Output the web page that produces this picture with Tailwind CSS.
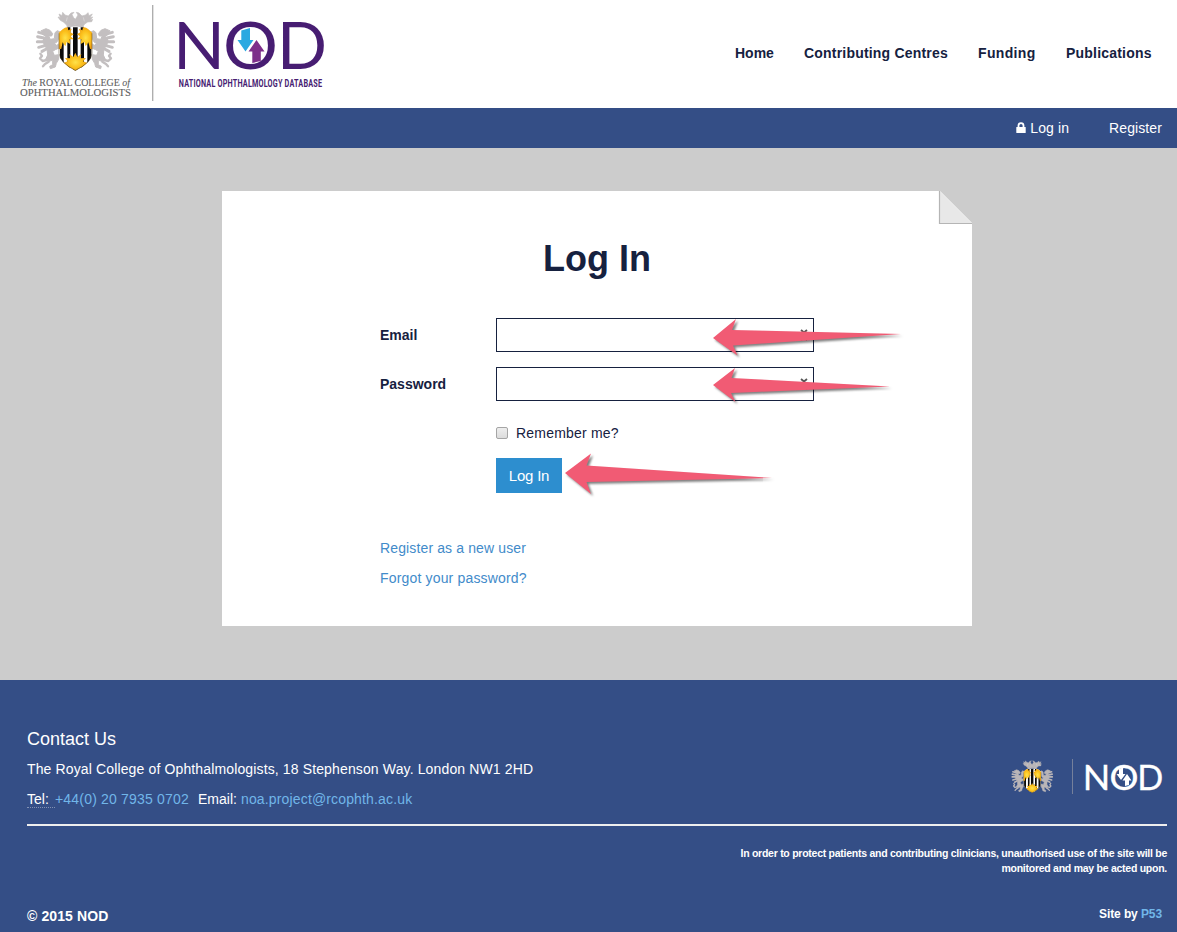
<!DOCTYPE html>
<html lang="en">
<head>
<meta charset="utf-8">
<title>Log In - NOD</title>
<script src="https://cdn.jsdelivr.net/npm/@tailwindcss/browser@4"></script>
</head>
<body class="w-[1177px] h-[932px] overflow-hidden bg-[#ccc] font-['Liberation_Sans',Arial,sans-serif] text-sm text-[#16213f] flex flex-col">

<svg class="absolute w-0 h-0" aria-hidden="true">
  <defs>
    <clipPath id="shield"><path d="M188 88 Q196 80 206 82 L248 82 Q257 80 265 88 L277 98 V160 Q274 190 226 212 Q180 190 176 160 V98 Z"/></clipPath>
    <radialGradient id="sun"><stop offset="0" stop-color="#ffe24a"/><stop offset=".55" stop-color="#fbc01c"/><stop offset="1" stop-color="#f0a010"/></radialGradient>
    <g id="supporter" fill="none" stroke="currentColor" stroke-linecap="round" stroke-linejoin="round">
      <path fill="currentColor" stroke-width="3" d="M124 92 L138 86 L150 91 L158 101 L155 108 L146 108 L151 118 L163 116 L165 98 L172 92 L183 97 L176 104 L175 119 L170 127 L163 130 L170 136 L178 131 V144 L166 149 L158 154 L163 166 L176 164 V178 L169 190 L166 201 L151 206 L149 199 L158 194 L158 181 L146 184 L137 178 L143 165 L141 146 L133 137 L129 121 L137 109 L128 103 Z"/>
      <path stroke-width="9" d="M130 101 L116 97 M132 114 L113 110 M132 125 L112 125 M135 137 L116 142 M139 147 L126 154"/>
      <path stroke-width="7" d="M140 180 L128 183 L120 175 L126 168 L121 161 M146 185 L135 192 L129 199"/>
    </g>
    <g id="crest">
      <use href="#supporter"/>
      <use href="#supporter" transform="matrix(-1 0 0 1 453 0)"/>
      <g fill="none" stroke="currentColor" stroke-linecap="round" stroke-linejoin="round">
        <path fill="currentColor" stroke-width="2" d="M203 79 Q225 70 249 79 L254 72 L263 66 L275 65 L278 58 L271 61 L278 51 L270 53 L277 42 L267 47 L264 38 L257 45 L246 48 L237 39 L229 37 L234 45 L229 53 L226 58 L221 53 L216 44 L222 37 L213 39 L205 48 L195 45 L188 37 L186 47 L177 42 L181 53 L174 51 L181 61 L190 66 L197 72 Z"/>
        <path stroke-width="6" d="M203 81 Q226 72 249 81"/>
      </g>
      <path d="M202 52 L199 64 M250 52 L253 64" stroke="#fff" stroke-width="2" opacity=".5"/>
      <g clip-path="url(#shield)">
        <path fill="#fff" d="M170 75 H282 V215 H170Z"/>
        <path fill="#0b0b0b" d="M180 120 H191 V215 H180Z M202 80 H211 V215 H202Z M219 80 H233 V215 H219Z M242 80 H252 V215 H242Z M262 120 H274 V215 H262Z"/>
        <path fill="url(#sun)" d="M170 78 H202 L205 91 L215 86 L211 97 L221 103 L212 109 L221 118 L209 118 L211 132 L200 126 L196 139 L188 127 L184 146 L170 150Z"/>
        <path fill="url(#sun)" d="M283 78 H250 L247 91 L237 86 L241 97 L231 103 L240 109 L232 118 L244 118 L242 132 L253 126 L257 139 L265 127 L270 146 L283 150Z"/>
        <path fill="url(#sun)" d="M226 158 L232 171 L244 162 L241 175 L258 174 L249 184 L263 189 L245 216 H208 L190 189 L203 184 L195 174 L211 175 L208 162 L220 171Z"/>
      </g>
      <path fill="none" stroke="#4a3f25" stroke-width="1.500" d="M177 100 V160 Q181 189 226 211 Q273 189 276 160 V100"/>
    </g>
  </defs>
</svg>

<header class="h-[108px] shrink-0 bg-white flex justify-between">
  <svg class="w-[345px] h-[108px]" viewBox="0 0 345 108" role="img" aria-label="The Royal College of Ophthalmologists, NOD">
    <use href="#crest" transform="scale(.3333)" color="#c3bfc0"/>
    <g fill="#5d5d5d" stroke="#5d5d5d" stroke-width=".1" font-family="'Liberation Serif',serif">
      <text x="22" y="86" font-size="11.300" textLength="108" lengthAdjust="spacingAndGlyphs"><tspan font-style="italic">The</tspan> ROYAL COLLEGE <tspan font-style="italic">of</tspan></text>
      <text x="20" y="95.500" font-size="11.300" textLength="111" lengthAdjust="spacingAndGlyphs">OPHTHALMOLOGISTS</text>
    </g>
    <path d="M152.700 5V101" stroke="#aaa" stroke-width="1.300"/>
    <g fill="#471d72" font-family="Lato,sans-serif" font-size="65">
      <text x="173" y="69" textLength="52" lengthAdjust="spacingAndGlyphs">N</text>
      <text x="223" y="69" textLength="55" lengthAdjust="spacingAndGlyphs">O</text>
      <text x="277" y="69" textLength="50" lengthAdjust="spacingAndGlyphs">D</text>
    </g>
    <path fill="#2ba9e1" d="M241.300 30.500L250 28V40H253.500L245.500 51.500L237.500 40H241.300Z"/>
    <path fill="#7d2f8a" d="M256.500 40L264.500 51.500H260.800V61L252.300 63V51.500H248.500Z"/>
    <text transform="translate(178.800 87) scale(.66 1)" fill="#471d72" font-family="Roboto,sans-serif" font-weight="700" font-size="11" textLength="217" lengthAdjust="spacing">NATIONAL OPHTHALMOLOGY DATABASE</text>
  </svg>
  <nav class="flex pt-[43px] pr-[15px] font-bold leading-5 tracking-[0.2px] whitespace-nowrap">
    <a class="w-[69px] tracking-normal">Home</a>
    <a class="w-[174px]">Contributing Centres</a>
    <a class="w-[88px] tracking-[0.350px]">Funding</a>
    <a class="w-[96px]">Publications</a>
  </nav>
</header>

<div class="h-10 shrink-0 bg-[#344e86] text-white flex items-center justify-end pr-[15px] gap-10">
  <a class="flex items-center gap-1">
    <svg class="w-[10px] h-3" viewBox="0 0 10 12"><path d="M2.500 6V3.600a2.500 2.500 0 0 1 5 0V6" fill="none" stroke="#fff" stroke-width="1.800"/><rect x=".3" y="5" width="9.400" height="6" rx=".6" fill="#fff"/></svg>
    <span class="tracking-[0.1px]">Log in</span>
  </a>
  <a class="tracking-[0.1px]">Register</a>
</div>

<main class="h-[532px] shrink-0 pt-[43px] pl-[222px]">
  <section class="relative w-[750px] h-[435px] bg-white pt-[45px]">
    <svg class="absolute right-0 top-0 w-[34px] h-[35px]" viewBox="0 0 34 35"><path fill="#ccc" d="M2 0H34V32Z"/><path fill="#e8e8e8" d="M1.500 0L34 32.500H1.500Z"/><path d="M1.500 0V32.500H34" fill="none" stroke="#b5b5b5" stroke-width="1.200"/></svg>
    <h1 class="text-center text-4xl leading-[46px] font-bold">Log In</h1>
    <form class="pl-[158px] pt-9">
      <div class="flex items-center h-[34px] mb-[15px]">
        <label class="w-[116px] font-bold">Email</label>
        <div class="w-[318px] h-[34px] border border-[#16213f] flex items-center justify-end pr-[5px]"><svg class="w-2 h-3" viewBox="0 0 8 12"><path d="M1 1L4 3.500L7 1M1 11L4 8.500L7 11M4 3V9" fill="none" stroke="#555" stroke-width="1.800"/></svg></div>
      </div>
      <div class="flex items-center h-[34px]">
        <label class="w-[116px] font-bold">Password</label>
        <div class="w-[318px] h-[34px] border border-[#16213f] flex items-center justify-end pr-[5px]"><svg class="w-2 h-3" viewBox="0 0 8 12"><path d="M1 1L4 3.500L7 1M1 11L4 8.500L7 11M4 3V9" fill="none" stroke="#555" stroke-width="1.800"/></svg></div>
      </div>
      <div class="pl-[116px] pt-[22px]">
        <label class="flex items-center gap-2 h-5 tracking-[0.2px]"><span class="size-3 rounded-[2px] border border-[#a5a5a5] bg-linear-to-b from-[#eee] to-[#dcdcdc]"></span>Remember me?</label>
        <button type="button" class="mt-[15px] block w-[66px] h-[35px] bg-[#2d8ecf] text-white text-[15px] leading-[35px] text-center tracking-[-0.2px]">Log In</button>
      </div>
      <div class="mt-[45px] text-[#428bca] leading-5 flex flex-col gap-2.5 tracking-[0.130px]">
        <a>Register as a new user</a>
        <a class="tracking-[0.170px]">Forgot your password?</a>
      </div>
    </form>
    <svg class="absolute left-[478px] top-[119px] w-[220px] h-[110px] drop-shadow-[2px_2px_1px_rgba(0,0,0,0.5)]" viewBox="700 310 220 110" fill="#f15b74">
      <path d="M713 338L736 319L732 330L901 334L733 345.500L737.500 355.500Z"/>
      <path d="M713 385L735 368L731.500 378L890 386.500L731 393L735.500 402Z"/>
    </svg>
    <svg class="absolute left-[338px] top-[259px] w-[220px] h-[52px] drop-shadow-[2px_2px_1px_rgba(0,0,0,0.5)]" viewBox="560 450 220 52" fill="#f15b74">
      <path d="M565 473L591 453.500L586.500 465.500L772 478L586.500 482L591 494Z"/>
    </svg>
  </section>
</main>

<footer class="h-[252px] shrink-0 bg-[#344e86] text-white pl-[27px] pr-[10px] pt-[47px]">
  <div class="h-[99px] flex justify-between border-b-2 border-[#eee]">
    <div>
      <h4 class="text-lg leading-6">Contact Us</h4>
      <p class="mt-2 leading-5 tracking-[0.135px]">The Royal College of Ophthalmologists, 18 Stephenson Way. London NW1 2HD</p>
      <p class="mt-2.5 leading-5 flex whitespace-pre"><span class="border-b border-dotted border-[#8291b3] leading-[18px] h-[19px] pt-px w-7">Tel: </span><a class="w-[143px] text-[#71b6e9] tracking-[0.190px]">+44(0) 20 7935 0702</a><span class="w-[43px]">Email: </span><a class="text-[#71b6e9] tracking-[0.150px]">noa.project@rcophth.ac.uk</a></p>
    </div>
    <svg class="mt-[25px] mr-1 w-[156px] h-[50px]" viewBox="1007 752 156 50" role="img" aria-label="NOD">
      <use href="#crest" transform="translate(992.500 754) scale(.1755 .183)" color="#b9b5b8"/>
      <path d="M1072.500 759V794" stroke="#75809b"/>
      <g fill="#fff" stroke="#fff" stroke-width=".3" font-family="Lato,sans-serif" font-size="34.500">
        <text x="1082.800" y="789.500" textLength="27.500" lengthAdjust="spacingAndGlyphs">N</text>
        <text x="1109.500" y="789.500" textLength="29" lengthAdjust="spacingAndGlyphs">O</text>
        <text x="1137.300" y="789.500" textLength="26" lengthAdjust="spacingAndGlyphs">D</text>
      </g>
      <path fill="#fff" d="M1119 769L1123 767.500V774H1125.500L1121 780L1116.500 774H1119Z M1127 774L1131.500 780.500H1129V785L1125 786V780.500H1122.500Z"/>
    </svg>
  </div>
  <p class="mt-5 text-right text-[10.5px] leading-[15px] font-bold tracking-[-0.260px] whitespace-nowrap">In order to protect patients and contributing clinicians, unauthorised use of the site will be<br>monitored and may be acted upon.</p>
  <div class="mt-[30px] flex justify-between font-bold leading-5">
    <p class="tracking-[0.1px]">© 2015 NOD</p>
    <p class="text-xs leading-4 pr-[5px] tracking-[-0.1px]">Site by <a class="text-[#71b6e9]">P53</a></p>
  </div>
</footer>
</body>
</html>
